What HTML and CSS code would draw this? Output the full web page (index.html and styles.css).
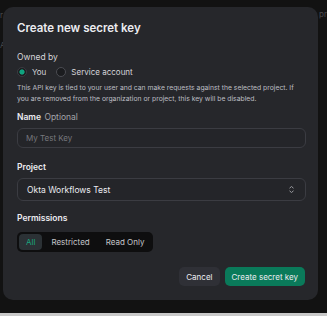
FILE: index.html
```html
<!DOCTYPE html>
<html lang="en">
<head>
  <meta charset="UTF-8" />
  <meta name="viewport" content="width=device-width, initial-scale=1.0" />
  <title>Create new secret key</title>
  <link rel="stylesheet" href="styles.css">
</head>
<body>
  <div class="backdrop-text left-a">r</div>
  <div class="backdrop-text left-b">A</div>
  <div class="backdrop-text right-a">pr</div>

  <section class="modal">
    <h2>Create new secret key</h2>

    <div class="field owner">
      <div class="label">Owned by</div>
      <div class="radios">
        <label class="radio"><span class="dot checked"></span>You</label>
        <label class="radio"><span class="dot"></span>Service account</label>
      </div>
      <p class="hint">This API key is tied to your user and can make requests against the selected project. If you are removed from the organization or project, this key will be disabled.</p>
    </div>

    <div class="field">
      <div class="label"><b>Name</b> <span class="muted">Optional</span></div>
      <input class="input" type="text" placeholder="My Test Key">
    </div>

    <div class="field project">
      <div class="label"><b>Project</b></div>
      <div class="input select">
        <span>Okta Workflows Test</span>
        <svg width="7" height="9" viewBox="0 0 7 9"><path d="M1.5 3.2 3.5 1.5 5.5 3.2M1.5 5.8 3.5 7.5 5.5 5.8" fill="none" stroke="#9a9ba0" stroke-width="1"/></svg>
      </div>
    </div>

    <div class="field">
      <div class="label"><b>Permissions</b></div>
      <div class="segmented">
        <span class="seg active">All</span>
        <span class="seg">Restricted</span>
        <span class="seg">Read Only</span>
      </div>
    </div>

    <div class="actions">
      <button class="btn ghost">Cancel</button>
      <button class="btn primary">Create secret key</button>
    </div>
  </section>
</body>
</html>
```

FILE: styles.css
```css
body {
  margin: 0;
  padding: 7px 9px 0 3px;
  height: 316px;
  box-sizing: border-box;
  background: #121212;
  font-family: 'Inter', sans-serif;
  color: #ececf1;
  border-bottom: 3px solid #c9c9c9;
  position: relative;
  overflow: hidden;
}
.backdrop-text {
  position: absolute;
  color: #4a4b4f;
  font-size: 8px;
}
.left-a { left: 0; top: 10px; }
.left-b { left: 0; top: 40px; }
.right-a { right: 0; top: 9px; }

.modal {
  background: #26272b;
  border-radius: 10px;
  height: 293px;
  box-sizing: border-box;
  padding: 14px 12px 0 14px;
  position: relative;
}
h2 {
  margin: 0 0 16px;
  font-size: 11.5px;
  line-height: 15px;
  font-weight: 600;
}
.field {
  margin-bottom: 14px;
}
.field.owner {
  margin-bottom: 8px;
}
.field.project {
  margin-bottom: 12px;
}
.label {
  font-size: 8.5px;
  line-height: 10px;
  color: #d6d6da;
  margin: 0 0 6px;
}
.owner .label { margin: 0; }
.label b { font-weight: 600; color: #ececf1; }
.muted { color: #a3a4a9; margin-left: 1px; }
.radios {
  display: flex;
  gap: 10px;
  height: 10px;
  margin-top: 5px;
  font-size: 8px;
}
.radio {
  display: flex;
  align-items: center;
  gap: 5px;
  color: #d6d6da;
}
.dot {
  width: 8px;
  height: 8px;
  border-radius: 50%;
  border: 1px solid #4b4c52;
  background: #1b1c1f;
  box-sizing: content-box;
}
.dot.checked {
  border-color: #3b3c42;
  background: radial-gradient(circle, #10a37f 0 2.2px, #1b1c1f 3px);
}
.hint {
  margin: 5px 0 0;
  font-size: 6.8px;
  line-height: 11px;
  color: #bdbec3;
}
.input {
  display: block;
  width: 100%;
  box-sizing: border-box;
  height: 20px;
  background: #242529;
  border: 1px solid #3b3c42;
  border-radius: 6px;
  padding: 0 8px;
  font-family: inherit;
  font-size: 8px;
  color: #ececf1;
}
.input::placeholder { color: #76777c; }
.select {
  height: 23px;
  display: flex;
  align-items: center;
  justify-content: space-between;
  padding: 0 10px 0 9px;
  font-size: 8.5px;
}
.segmented {
  display: inline-flex;
  background: #0e0e0f;
  border-radius: 5px;
  padding: 2px;
  gap: 2px;
}
.seg {
  font-size: 8px;
  line-height: 10px;
  color: #c5c6ca;
  padding: 3px 7px;
  border-radius: 4px;
}
.seg.active {
  background: #2b3135;
  color: #19a67e;
}
.actions {
  position: absolute;
  right: 13px;
  bottom: 14px;
  display: flex;
  gap: 5px;
}
.btn {
  font-family: inherit;
  font-size: 8px;
  border: none;
  border-radius: 5px;
  height: 19px;
  padding: 0 7px;
  color: #ececf1;
}
.ghost { background: #2f3036; }
.primary { background: #0a7a5a; }
```
